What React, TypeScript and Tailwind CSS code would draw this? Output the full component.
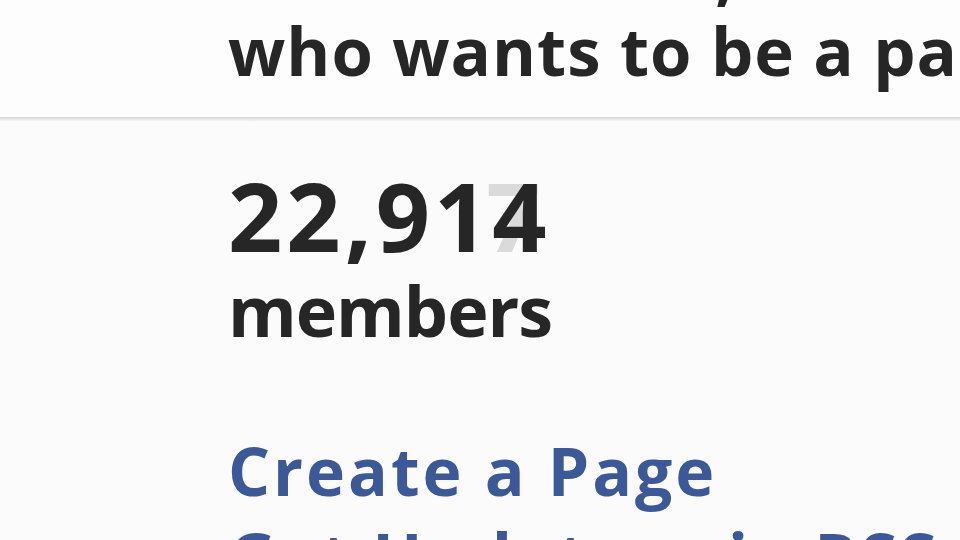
export default function App() {
  return (
    <div
      className="h-[540px] w-[960px] overflow-hidden bg-[#fbfbfb] text-[#262626]"
      style={{ fontFamily: '"Open Sans", "Noto Sans", sans-serif' }}
    >
      <div className="h-[117px] overflow-hidden bg-[#fdfdfd] pl-[228px]">
        <div className="-mt-[67px] whitespace-nowrap text-[67px] leading-[78px] font-bold tracking-[1px]">
          <div>For the artists,</div>
          <div>who wants to be a part of it</div>
        </div>
      </div>
      <div className="h-[4px] bg-gradient-to-b from-[#d6d6d6] to-[#f4f4f4]" />

      <div className="pl-[228px]">
        <div className="relative mt-[47px] w-fit text-[95px] leading-none font-bold tracking-[4px]">
          22,914
          <span className="absolute right-[6px] top-0 text-[#262626] opacity-15">7</span>
        </div>
        <div className="mt-[12px] text-[70px] leading-none font-bold tracking-[-1px]">members</div>

        <div className="mt-[92px] flex flex-col gap-[20px] text-[66px] leading-none font-bold tracking-[3px] text-[#3b5998]">
          <a className="whitespace-nowrap">Create a Page</a>
          <a className="whitespace-nowrap">Get Updates via RSS</a>
        </div>
      </div>
    </div>
  );
}
